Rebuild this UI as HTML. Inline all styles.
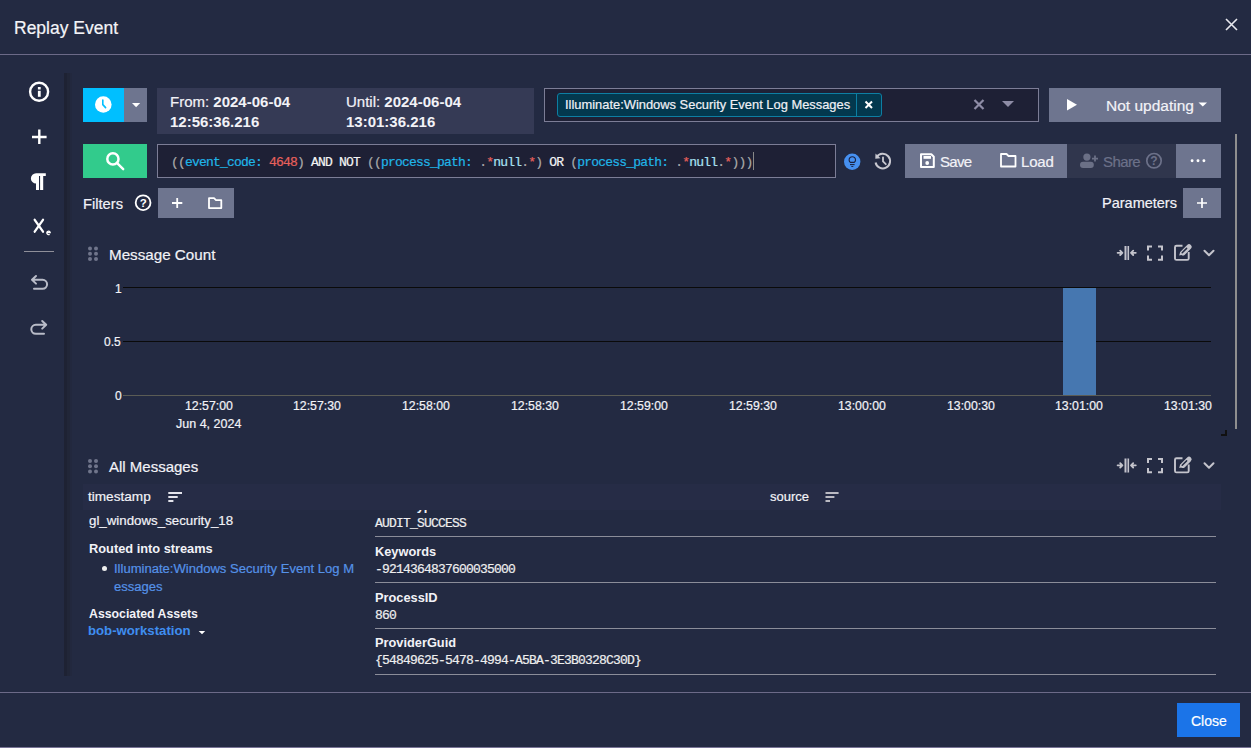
<!DOCTYPE html>
<html><head><meta charset="utf-8">
<style>
*{box-sizing:border-box;margin:0;padding:0}
html,body{width:1251px;height:748px;overflow:hidden;background:#232a42;color:#f2f2f7;font-family:"Liberation Sans",sans-serif}
.a{position:absolute}
.t{position:absolute;white-space:nowrap;line-height:1;-webkit-text-stroke:0.2px currentColor}
.mono{font-family:"Liberation Mono",monospace;font-size:13px;letter-spacing:-0.8px}
svg.ov{position:absolute;left:0;top:0;overflow:visible}
b{font-weight:bold;-webkit-text-stroke:0}
</style></head><body>

<!-- header -->
<div class="t" style="left:14px;top:20px;font-size:17.5px;color:#f4f4f8">Replay Event</div>
<div class="a" style="left:0;top:54px;width:1251px;height:1px;background:#6c6a88"></div>

<!-- sidebar shadow -->
<div class="a" style="left:64px;top:73px;width:3px;height:603px;background:#1e2233"></div>
<div class="a" style="left:67px;top:73px;width:3px;height:603px;background:#212638"></div>
<div class="a" style="left:70px;top:73px;width:2px;height:603px;background:#22283e"></div>

<!-- ===== top row ===== -->
<div class="a" style="left:83px;top:88px;width:41px;height:34px;background:#00bfff"></div>
<div class="a" style="left:124px;top:88px;width:23px;height:34px;background:#6e758f"></div>
<div class="a" style="left:157px;top:88px;width:377px;height:46px;background:#353a55"></div>
<div class="t" style="left:170px;top:93.5px;font-size:15px">From: <b>2024-06-04</b></div>
<div class="t" style="left:170px;top:113.5px;font-size:15px"><b>12:56:36.216</b></div>
<div class="t" style="left:346px;top:93.5px;font-size:15px">Until: <b>2024-06-04</b></div>
<div class="t" style="left:346px;top:113.5px;font-size:15px"><b>13:01:36.216</b></div>

<div class="a" style="left:544px;top:88px;width:495px;height:34px;background:#1e2035;border:1px solid #7c7d96"></div>
<div class="a" style="left:557px;top:93px;width:325px;height:24px;background:#03384e;border:1px solid #0d7ea3;border-radius:3px"></div>
<div class="a" style="left:856px;top:94px;width:1px;height:22px;background:#0d7ea3"></div>
<div class="t" style="left:565px;top:99px;font-size:12.9px;color:#f0f0f5">Illuminate:Windows Security Event Log Messages</div>

<div class="a" style="left:1049px;top:88px;width:172px;height:34px;background:#6e758f"></div>
<div class="t" style="left:1106px;top:98px;font-size:15.5px">Not updating</div>

<div class="a" style="left:1235px;top:134px;width:2px;height:295px;background:#8e8e8e"></div>

<!-- ===== query row ===== -->
<div class="a" style="left:83px;top:144px;width:64px;height:34px;background:#32cb8c"></div>
<div class="a" style="left:157px;top:144px;width:679px;height:34px;background:#1e2035;border:1px solid #7c7d96"></div>
<div class="t mono" style="left:171px;top:156px;color:#aaa"><span>((</span><span style="color:#20b5e8">event_code:</span> <span style="color:#e8605c">4648</span>) <span style="color:#f4f4f4">AND NOT</span> ((<span style="color:#20b5e8">process_path:</span> .<span style="color:#e8605c">*</span><span style="color:#a8e2f2">null</span>.<span style="color:#e8605c">*</span>) <span style="color:#f4f4f4">OR</span> (<span style="color:#20b5e8">process_path:</span> .<span style="color:#e8605c">*</span><span style="color:#a8e2f2">null</span>.<span style="color:#e8605c">*</span>)))</div>
<div class="a" style="left:753px;top:152px;width:1px;height:18px;background:#888"></div>

<div class="a" style="left:905px;top:144px;width:162px;height:34px;background:#6e758f"></div>
<div class="a" style="left:1067px;top:144px;width:109px;height:34px;background:#30364d"></div>
<div class="a" style="left:1176px;top:144px;width:45px;height:34px;background:#6e758f"></div>
<div class="t" style="left:940px;top:153.5px;font-size:15px;letter-spacing:-0.7px">Save</div>
<div class="t" style="left:1021px;top:153.5px;font-size:15px;letter-spacing:-0.2px">Load</div>
<div class="t" style="left:1103px;top:153.5px;font-size:15px;letter-spacing:-0.6px;color:#6c7189">Share</div>

<!-- filters row -->
<div class="t" style="left:83px;top:197px;font-size:14.7px">Filters</div>
<div class="a" style="left:158px;top:188px;width:76px;height:30px;background:#6e758f"></div>
<div class="t" style="left:1102px;top:196px;font-size:14.5px">Parameters</div>
<div class="a" style="left:1183px;top:188px;width:38px;height:30px;background:#6e758f"></div>

<!-- ===== Message Count ===== -->
<div class="t" style="left:109px;top:247px;font-size:15.2px">Message Count</div>
<div class="a" style="left:123px;top:287px;width:1088px;height:1px;background:#0a0a0a"></div>
<div class="a" style="left:123px;top:341px;width:1088px;height:1px;background:#0a0a0a"></div>
<div class="a" style="left:1063px;top:288px;width:33px;height:107px;background:#4677b0"></div>
<div class="a" style="left:123px;top:395px;width:1088px;height:1px;background:#5b5c55"></div>
<div class="t" style="left:115px;top:282.5px;font-size:12px">1</div>
<div class="t" style="left:104px;top:335.5px;font-size:12px">0.5</div>
<div class="t" style="left:115px;top:389.5px;font-size:12px">0</div>
<div class="t" style="left:185px;top:399.5px;font-size:12.3px">12:57:00</div>
<div class="t" style="left:176px;top:418px;font-size:12.5px">Jun 4, 2024</div>
<div class="t" style="left:293px;top:399.5px;font-size:12.3px">12:57:30</div>
<div class="t" style="left:402px;top:399.5px;font-size:12.3px">12:58:00</div>
<div class="t" style="left:511px;top:399.5px;font-size:12.3px">12:58:30</div>
<div class="t" style="left:620px;top:399.5px;font-size:12.3px">12:59:00</div>
<div class="t" style="left:729px;top:399.5px;font-size:12.3px">12:59:30</div>
<div class="t" style="left:838px;top:399.5px;font-size:12.3px">13:00:00</div>
<div class="t" style="left:947px;top:399.5px;font-size:12.3px">13:00:30</div>
<div class="t" style="left:1055px;top:399.5px;font-size:12.3px">13:01:00</div>
<div class="t" style="left:1164px;top:399.5px;font-size:12.3px">13:01:30</div>
<div class="a" style="left:1225px;top:430px;width:2px;height:6px;background:#111"></div>
<div class="a" style="left:1221px;top:434px;width:6px;height:2px;background:#111"></div>

<!-- ===== All Messages ===== -->
<div class="t" style="left:109px;top:459px;font-size:15px">All Messages</div>
<div class="a" style="left:83px;top:484px;width:1138px;height:26px;background:#262c46"></div>
<div class="t" style="left:88px;top:490px;font-size:13.6px">timestamp</div>
<div class="t" style="left:770px;top:490px;font-size:13px">source</div>

<div class="a" style="left:83px;top:510px;width:1138px;height:166px;overflow:hidden">
  <div class="t" style="left:6px;top:4px;font-size:13.3px">gl_windows_security_18</div>
  <div class="t" style="left:6px;top:33px;font-size:12.8px;font-weight:bold;-webkit-text-stroke:0">Routed into streams</div>
  <div class="a" style="left:19px;top:56px;width:5px;height:5px;border-radius:50%;background:#eee"></div>
  <div class="t" style="left:31px;top:52px;font-size:13.05px;color:#5592e8">Illuminate:Windows Security Event Log M</div>
  <div class="t" style="left:31px;top:70px;font-size:13.05px;color:#5592e8">essages</div>
  <div class="t" style="left:6px;top:97.7px;font-size:12.3px;font-weight:bold;-webkit-text-stroke:0">Associated Assets</div>
  <div class="t" style="left:5px;top:114px;font-size:13.2px;font-weight:bold;-webkit-text-stroke:0;color:#3f8ef0">bob-workstation</div>

  <div class="t" style="left:292px;top:-10px;font-size:12.8px;font-weight:bold;-webkit-text-stroke:0">EventType</div>
  <div class="t mono" style="left:292px;top:7px;color:#eee">AUDIT_SUCCESS</div>
  <div class="a" style="left:292px;top:26px;width:841px;height:1px;background:#8b8d99"></div>
  <div class="t" style="left:292px;top:36px;font-size:12.8px;font-weight:bold;-webkit-text-stroke:0">Keywords</div>
  <div class="t mono" style="left:292px;top:53px;color:#eee">-9214364837600035000</div>
  <div class="a" style="left:292px;top:72px;width:841px;height:1px;background:#8b8d99"></div>
  <div class="t" style="left:292px;top:82px;font-size:12.8px;font-weight:bold;-webkit-text-stroke:0">ProcessID</div>
  <div class="t mono" style="left:292px;top:99px;color:#eee">860</div>
  <div class="a" style="left:292px;top:118px;width:841px;height:1px;background:#8b8d99"></div>
  <div class="t" style="left:292px;top:127px;font-size:12.8px;font-weight:bold;-webkit-text-stroke:0">ProviderGuid</div>
  <div class="t mono" style="left:292px;top:144px;color:#eee">{54849625-5478-4994-A5BA-3E3B0328C30D}</div>
  <div class="a" style="left:292px;top:164px;width:841px;height:1px;background:#8b8d99"></div>
</div>

<!-- footer -->
<div class="a" style="left:0;top:692px;width:1251px;height:1px;background:#6c6a88"></div>
<div class="a" style="left:1177px;top:703px;width:63px;height:34px;background:#1b74e8"></div>
<div class="t" style="left:1191px;top:714px;font-size:14px;color:#fff">Close</div>
<div class="a" style="left:0;top:747px;width:1251px;height:1px;background:#787496"></div>

<!-- ===== icons overlay ===== -->
<svg class="ov" width="1251" height="748" viewBox="0 0 1251 748">
  <!-- modal close -->
  <path d="M1226 19L1237 30M1237 19L1226 30" stroke="#e8e8ee" stroke-width="1.6"/>
  <!-- sidebar -->
  <circle cx="39.1" cy="91.8" r="9" fill="none" stroke="#fff" stroke-width="2.4"/>
  <rect x="37.9" y="87" width="2.8" height="2.5" fill="#fff"/>
  <rect x="37.9" y="90.8" width="2.8" height="6" fill="#fff"/>
  <path d="M32 137H46.6M39.3 129.6V144" stroke="#fff" stroke-width="2.4"/>
  <path d="M45.8 173.2H36.1A5.2 5.2 0 0 0 36.1 183.6H36V189.9H39V176H40.1V189.9H43.2V176H45.8Z" fill="#fff"/>
  <path d="M34.7 219.8L43 231.7M43 219.8L34.7 231.7" stroke="#fff" stroke-width="2.3" stroke-linecap="round"/>
  <path d="M46.8 232.6H50.2A1.7 1.7 0 1 0 49.6 234.2" fill="none" stroke="#fff" stroke-width="1.3"/>
  <rect x="24" y="251" width="30" height="1" fill="#8f8f99"/>
  <path d="M34 288.8H42.6A4.5 4.5 0 0 0 42.6 279.8H32.5M36 276L32 279.8L36 283.6" fill="none" stroke="#b9bcc8" stroke-width="2" stroke-linecap="round" stroke-linejoin="round"/>
  <path d="M44 333.8H35.8A4.5 4.5 0 0 1 35.8 324.8H46M42.2 321L46.2 324.8L42.2 328.6" fill="none" stroke="#b9bcc8" stroke-width="2" stroke-linecap="round" stroke-linejoin="round"/>
  <!-- clock -->
  <circle cx="103.3" cy="104.5" r="8.3" fill="#fff"/>
  <path d="M102.8 100V104.6L105.6 107.6" fill="none" stroke="#00bfff" stroke-width="1.6" stroke-linecap="round"/>
  <path d="M132 103H140.2L136.1 107.3Z" fill="#fff"/>
  <!-- stream box -->
  <path d="M865.5 101.5L872 108M872 101.5L865.5 108" stroke="#fff" stroke-width="2"/>
  <path d="M974.5 100L983.5 109M983.5 100L974.5 109" stroke="#8e8ca6" stroke-width="2.2"/>
  <path d="M1002 101H1014L1008 107Z" fill="#8e8ca6"/>
  <!-- play + caret -->
  <path d="M1067 99V110.5L1077 104.75Z" fill="#fff"/>
  <path d="M1198.5 102.5H1207L1202.75 106.5Z" fill="#fff"/>
  <!-- search -->
  <circle cx="112.9" cy="158.9" r="5.6" fill="none" stroke="#fff" stroke-width="2.5"/>
  <path d="M117.4 163.4L123.2 169.2" stroke="#fff" stroke-width="2.4" stroke-linecap="round"/>
  <!-- bulb -->
  <circle cx="852.2" cy="161.8" r="8.2" fill="#4690f0"/>
  <path d="M850.3 162.4A3.2 3.2 0 1 1 854.3 162.4Z" fill="none" stroke="#1a2240" stroke-width="1.1" stroke-linejoin="round"/>
  <path d="M850 164.6H854.6" stroke="#1a2240" stroke-width="1.1"/>
  <path d="M851.3 166.5H853.3" stroke="#1a2240" stroke-width="0.9"/>
  <!-- history -->
  <path d="M876.6 157.2A7.3 7.3 0 1 1 875.6 162.5" fill="none" stroke="#c8c8d0" stroke-width="2"/>
  <path d="M875.5 153.5L875.3 158.8L880.5 158.3Z" fill="#c8c8d0"/>
  <path d="M883 157.3V161.3L885.8 164.2" fill="none" stroke="#c8c8d0" stroke-width="1.8" stroke-linecap="round"/>
  <!-- floppy -->
  <path d="M921 154.2H931.3L933.8 156.7V167H921Z" fill="none" stroke="#fff" stroke-width="2" stroke-linejoin="round"/>
  <rect x="923.5" y="156" width="7.5" height="2.8" fill="#fff"/>
  <circle cx="927.2" cy="163" r="1.9" fill="#fff"/>
  <!-- load folder -->
  <path d="M1001 154H1006.5L1008.5 156H1015.5V166.5H1001Z" fill="none" stroke="#fff" stroke-width="1.8" stroke-linejoin="round"/>
  <!-- share user-plus -->
  <circle cx="1086.9" cy="157.1" r="3.6" fill="#6b7086"/>
  <rect x="1080" y="161.8" width="13.8" height="6.1" rx="3" fill="#6b7086"/>
  <path d="M1092 158.6H1098M1095 155.6V161.6" stroke="#6b7086" stroke-width="1.8"/>
  <circle cx="1154" cy="160.7" r="7.2" fill="none" stroke="#6c7189" stroke-width="1.7"/>
  <text x="1154" y="165.3" font-size="12" font-weight="bold" text-anchor="middle" fill="#6c7189" font-family="Liberation Sans">?</text>
  <!-- ellipsis -->
  <circle cx="1192.1" cy="160.7" r="1.45" fill="#fff"/><circle cx="1198" cy="160.7" r="1.45" fill="#fff"/><circle cx="1203.9" cy="160.7" r="1.45" fill="#fff"/>
  <!-- filters help -->
  <circle cx="143.1" cy="202.7" r="7.4" fill="none" stroke="#fff" stroke-width="1.8"/>
  <text x="143.2" y="206.8" font-size="11.5" font-weight="bold" text-anchor="middle" fill="#fff" font-family="Liberation Sans">?</text>
  <path d="M172 203H182.3M177.2 197.9V208" stroke="#fff" stroke-width="1.8"/>
  <path d="M209 198.2H214L216 200.2H221.3V208.1H209Z" fill="none" stroke="#fff" stroke-width="1.8" stroke-linejoin="round"/>
  <path d="M1197 203H1207M1202 198V208" stroke="#fff" stroke-width="1.7"/>
  <!-- drag handles -->
  <g fill="#70758b"><circle cx="90" cy="248.6" r="2"/><circle cx="96" cy="248.6" r="2"/><circle cx="90" cy="253.8" r="2"/><circle cx="96" cy="253.8" r="2"/><circle cx="90" cy="259.0" r="2"/><circle cx="96" cy="259.0" r="2"/><circle cx="90" cy="461" r="2"/><circle cx="96" cy="461" r="2"/><circle cx="90" cy="466.2" r="2"/><circle cx="96" cy="466.2" r="2"/><circle cx="90" cy="471.4" r="2"/><circle cx="96" cy="471.4" r="2"/></g>
  <!-- widget icons (Message Count) -->
  <g fill="none" stroke="#c4c4cc" stroke-width="1.9">
    <path d="M1125.3 246V260M1128.3 246V260" stroke-width="1.6"/><path d="M1126.8 246V260" stroke="#7a7d90" stroke-width="1.4"/>
    <path d="M1117.6 252.8H1122M1120.2 250.6L1122.4 252.8L1120.2 255" stroke-width="1.8" stroke-linecap="round" stroke-linejoin="round"/>
    <path d="M1135.8 252.8H1131.4M1133.2 250.6L1131 252.8L1133.2 255" stroke-width="1.8" stroke-linecap="round" stroke-linejoin="round"/>
    <path d="M1148 250.5V246.5H1152M1158 246.5H1162V250.5M1162 255.5V259.8H1158M1152 259.8H1148V255.5" stroke-width="2"/>
    <path d="M1182.5 245.8H1176.5Q1175 245.8 1175 247.3V258.4Q1175 259.9 1176.5 259.9H1187.2Q1188.7 259.9 1188.7 258.4V252" stroke-width="1.9"/>
    <path d="M1183 252.8L1189 246.8" stroke-width="5.2" stroke-linecap="round"/>
    <path d="M1179.2 255.6L1180.3 251.4L1183.5 254.5Z" fill="#c4c4cc" stroke="none"/>
    <path d="M1182.2 252.8L1186.6 248.4" stroke="#232a42" stroke-width="1.5" stroke-linecap="round"/>
    <path d="M1204.5 250.8L1209 255.2L1213.5 250.8" stroke-width="2" stroke-linecap="round" stroke-linejoin="round"/>
  </g>
  <g transform="translate(0 212.5)" fill="none" stroke="#c4c4cc" stroke-width="1.9">
    <path d="M1125.3 246V260M1128.3 246V260" stroke-width="1.6"/><path d="M1126.8 246V260" stroke="#7a7d90" stroke-width="1.4"/>
    <path d="M1117.6 252.8H1122M1120.2 250.6L1122.4 252.8L1120.2 255" stroke-width="1.8" stroke-linecap="round" stroke-linejoin="round"/>
    <path d="M1135.8 252.8H1131.4M1133.2 250.6L1131 252.8L1133.2 255" stroke-width="1.8" stroke-linecap="round" stroke-linejoin="round"/>
    <path d="M1148 250.5V246.5H1152M1158 246.5H1162V250.5M1162 255.5V259.8H1158M1152 259.8H1148V255.5" stroke-width="2"/>
    <path d="M1182.5 245.8H1176.5Q1175 245.8 1175 247.3V258.4Q1175 259.9 1176.5 259.9H1187.2Q1188.7 259.9 1188.7 258.4V252" stroke-width="1.9"/>
    <path d="M1183 252.8L1189 246.8" stroke-width="5.2" stroke-linecap="round"/>
    <path d="M1179.2 255.6L1180.3 251.4L1183.5 254.5Z" fill="#c4c4cc" stroke="none"/>
    <path d="M1182.2 252.8L1186.6 248.4" stroke="#232a42" stroke-width="1.5" stroke-linecap="round"/>
    <path d="M1204.5 250.8L1209 255.2L1213.5 250.8" stroke-width="2" stroke-linecap="round" stroke-linejoin="round"/>
  </g>
  <!-- sort icons -->
  <path d="M168.3 493H182M168.3 497H177.7M168.3 501H173.4" stroke="#e4e4ec" stroke-width="2"/>
  <path d="M825.5 493H838.6M825.5 497H834.4M825.5 501H830" stroke="#babac2" stroke-width="2"/>
  <!-- bob caret -->
  <path d="M198.7 631H205.2L202 634.3Z" fill="#fff"/>
</svg>

</body></html>
